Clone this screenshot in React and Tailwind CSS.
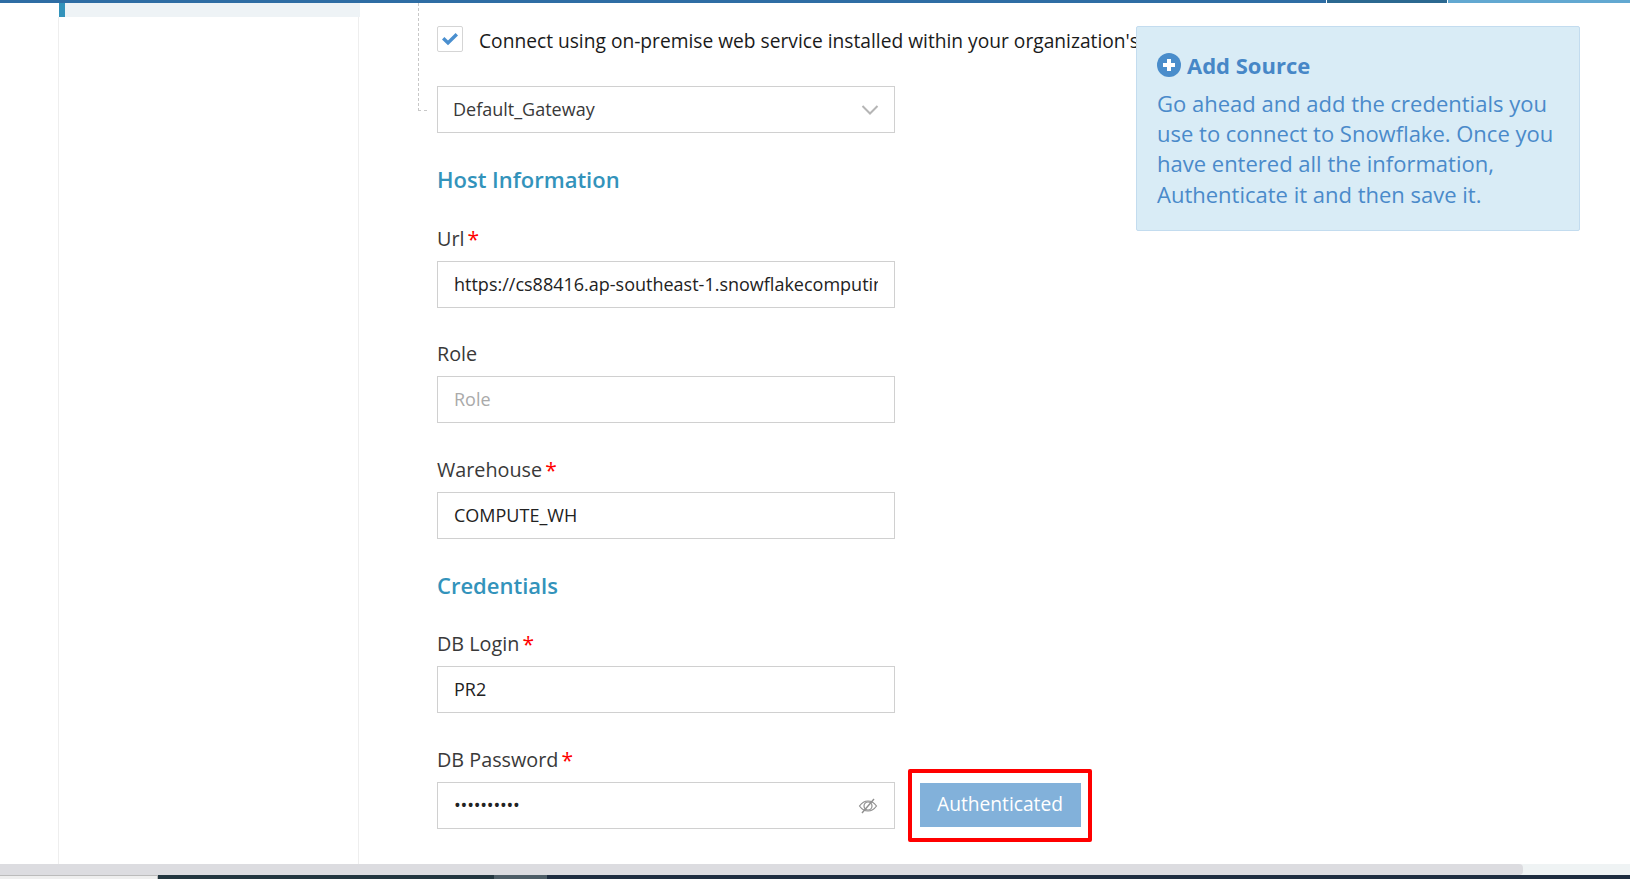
import React from "react";

function Label({ text, required, className = "" }) {
  return (
    <div className={`h-[22px] flex items-center text-[19.8px] leading-[22px] text-[#393939] ${className}`}>
      <span>{text}</span>
      {required && <span className="ml-[3px] text-[#ff0000] text-[21px] leading-[22px]">*</span>}
    </div>
  );
}

function Input({ value, placeholder }) {
  return (
    <div className="w-[458px] h-[47px] border border-[#d0d0d0] bg-white flex items-center pl-[16px] pr-[16px] text-[18px] text-[#222]">
      <div className="w-full overflow-hidden whitespace-nowrap">
        {value ? <span>{value}</span> : <span className="text-[#aaaaaa]">{placeholder}</span>}
      </div>
    </div>
  );
}

function EyeSlash() {
  return (
    <svg width="20" height="18" viewBox="0 0 20 18" fill="none" stroke="#8f8f8f" strokeWidth="1.2">
      <path d="M1.5 9C4 5.5 7 4 10 4s6 1.5 8.5 5C16 12.5 13 14 10 14S4 12.5 1.5 9Z" />
      <circle cx="10" cy="9" r="4" />
      <path d="M16 2 4 16" strokeWidth="1.4" />
    </svg>
  );
}

export default function App() {
  return (
    <div className="relative w-[1630px] h-[879px] overflow-hidden bg-white flex flex-col font-['Open_Sans',sans-serif]">
      <div className="flex h-[3px] shrink-0 gap-[1px]">
        <div className="w-[1326px] bg-[#2e6da4]" />
        <div className="w-[120px] bg-[#2b6890]" />
        <div className="flex-1 bg-[#62a8d1]" />
      </div>

      <div className="flex flex-1 min-h-0">
        <div className="w-[58px] shrink-0" />
        <div className="w-[302px] shrink-0 relative">
          <div className="h-[14px] ml-px bg-[#eef3f6]">
            <div className="w-[6px] h-full bg-[#3393bb]" />
          </div>
          <div className="h-[847px] w-[301px] border-l border-r border-[#eeeeee]" />
        </div>

        <div className="relative flex-1 pl-[77px] min-w-0">
          <div className="absolute left-[58px] top-0 w-[9px] h-[108px] border-l border-b border-dashed border-[#c8c8c8]" />

          <div className="flex items-center h-[26px] mt-[23px] whitespace-nowrap">
            <div className="w-[26px] h-[26px] shrink-0 border border-[#d5d5d5] rounded-[2px] flex items-center justify-center pb-[1px]">
              <svg width="18" height="14" viewBox="0 0 18 14">
                <path d="M1 7.500 3.400 5l3.600 3.600L14.600 1 17 3.400 7 13.200Z" fill="#4a8fcf" />
              </svg>
            </div>
            <span className="ml-[16px] pt-[4px] text-[19.2px] leading-[26px] text-[#1a1a1a]">
              Connect using on-premise web service installed within your organization's network
            </span>
          </div>

          <div className="mt-[34px] w-[458px] h-[47px] border border-[#d0d0d0] flex items-center justify-between pl-[15px] pr-[15px] text-[18px] text-[#393939]">
            <span>Default_Gateway</span>
            <svg width="18" height="12" viewBox="0 0 18 12" fill="none" stroke="#b5b5b5" strokeWidth="2">
              <path d="M1.500 2 9 9.500 16.500 2" />
            </svg>
          </div>

          <h2 className="mt-[31px] h-[30px] leading-[30px] text-[22px] font-semibold text-[#3393bb]">Host Information</h2>

          <Label text="Url" required className="mt-[34px]" />
          <div className="mt-[11px]">
            <Input value="https://cs88416.ap-southeast-1.snowflakecomputing.com" />
          </div>

          <Label text="Role" className="mt-[35px]" />
          <div className="mt-[11px]">
            <Input placeholder="Role" />
          </div>

          <Label text="Warehouse" required className="mt-[36px]" />
          <div className="mt-[11px]">
            <Input value="COMPUTE_WH" />
          </div>

          <h2 className="mt-[31px] h-[30px] leading-[30px] text-[22px] font-semibold text-[#3393bb]">Credentials</h2>

          <Label text="DB Login" required className="mt-[33px]" />
          <div className="mt-[11px]">
            <Input value="PR2" />
          </div>

          <Label text="DB Password" required className="mt-[36px]" />
          <div className="mt-[11px] flex items-center">
            <div className="w-[458px] h-[47px] border border-[#d0d0d0] flex items-center justify-between pl-[16px] pr-[16px]">
              <span className="text-[18px] tracking-[-0.2px] text-[#222]">••••••••••</span>
              <EyeSlash />
            </div>
            <div className="ml-[13px] -my-[13px] w-[184px] h-[73px] border-4 border-[#ff0000] rounded-[2px] flex items-center justify-center">
              <div className="mb-[2px] w-[161px] h-[44px] bg-[#82b1da] text-white text-[19.2px] flex items-center justify-center">
                Authenticated
              </div>
            </div>
          </div>
        </div>
      </div>

      <div className="absolute left-[1136px] top-[26px] w-[444px] h-[205px] bg-[#d9ecf6] border border-[#c3dcef] rounded-[2px] pl-[20px] pt-[23px]">
        <div className="flex items-center h-[30px] text-[#4787c7]">
          <svg width="24" height="24" viewBox="0 0 24 24">
            <circle cx="12" cy="12" r="12" fill="#4a8dcb" />
            <path d="M10 6h4v4h4v4h-4v4h-4v-4H6v-4h4Z" fill="#fff" />
          </svg>
          <span className="ml-[6px] text-[22px] font-bold">Add Source</span>
        </div>
        <p className="mt-[8px] text-[22px] leading-[30.2px] text-[#4a8aca]">
          Go ahead and add the credentials you
          <br />
          use to connect to Snowflake. Once you
          <br />
          have entered all the information,
          <br />
          Authenticate it and then save it.
        </p>
      </div>

      <div className="h-[11px] shrink-0 bg-[#eff3f4]">
        <div className="h-full w-[1523px] bg-[#dcdce0] rounded-r-[4px]" />
      </div>
      <div className="h-[4px] shrink-0 flex">
        <div className="w-[158px] bg-[#eeeeee] border-t border-r border-[#bbbbbb]" />
        <div className="w-[336px] bg-[#22363f]" />
        <div className="w-[53px] bg-[#4d5d66]" />
        <div className="flex-1 bg-[#1e2d40]" />
      </div>
    </div>
  );
}
